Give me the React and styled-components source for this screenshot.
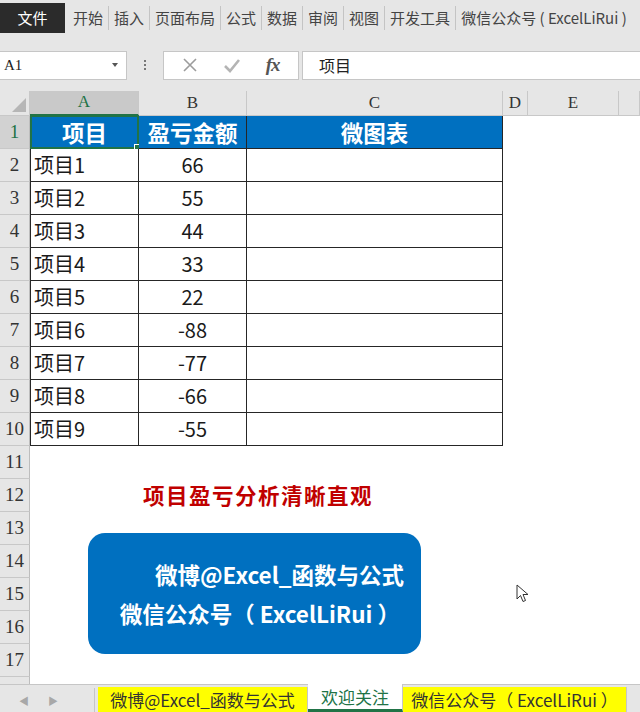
import React from 'react'
import styled, { createGlobalStyle } from 'styled-components'

const GlobalStyle = createGlobalStyle`
  body {
    margin: 0;
    font-family: "Noto Sans CJK SC", "Noto Sans", sans-serif;
    background: #fff;
  }
`

const Window = styled.div`
  width: 640px;
  height: 712px;
  overflow: hidden;
  display: flex;
  flex-direction: column;
  background: #e6e6e6;
`

const RibbonTabs = styled.nav`
  height: 33px;
  display: flex;
  align-items: flex-end;
  font-size: 15px;
  color: #444;
  overflow: hidden;
`

const FileTab = styled.div`
  flex-shrink: 0;
  width: 65px;
  height: 30px;
  background: #2b2b2b;
  color: #fff;
  display: flex;
  align-items: center;
  justify-content: center;
  margin-right: 3px;
`

const RibbonTab = styled.div`
  flex-shrink: 0;
  display: flex;
  align-items: center;
  padding: 0 5px;
  white-space: nowrap;
  border-left: ${p => (p.first ? 'none' : '1px solid #c4c4c4')};
  height: 24px;
  margin-bottom: 3px;
`

const Band = styled.div`
  height: ${p => p.h}px;
  flex-shrink: 0;
`

const FormulaRow = styled.div`
  height: 29px;
  display: flex;
  align-items: stretch;
`

const Field = styled.div`
  background: #fff;
  border: 1px solid #c6c6c6;
  box-sizing: border-box;
  display: flex;
  align-items: center;
`

const NameBox = styled(Field)`
  width: 127px;
  border-left: none;
  padding: 0 8px 0 4px;
  justify-content: space-between;
  font-family: "Liberation Serif", serif;
  font-size: 15px;
  color: #222;
`

const Caret = styled.span`
  width: 0;
  height: 0;
  border-left: 3px solid transparent;
  border-right: 3px solid transparent;
  border-top: 4px solid #555;
`

const Dots = styled.div`
  width: 36px;
  display: flex;
  flex-direction: column;
  align-items: center;
  justify-content: center;
  gap: 2px;
  span {
    width: 2px;
    height: 2px;
    background: #777;
  }
`

const FuncBox = styled(Field)`
  width: 136px;
  justify-content: space-around;
  padding: 0 6px;
  margin-right: 3px;
`

const FxLabel = styled.span`
  font-family: "Liberation Serif", serif;
  font-style: italic;
  font-weight: bold;
  font-size: 19px;
  color: #555;
  letter-spacing: -1px;
`

const FormulaInput = styled(Field)`
  flex: 1;
  border-right: none;
  padding-left: 16px;
  font-size: 16px;
  color: #222;
`

const Sheet = styled.div`
  position: relative;
  height: 594px;
  background: #fff;
  display: grid;
  grid-template-columns: 30px 109px 108px 256px 25px 91px 1fr;
  grid-template-rows: 25px repeat(17, 33px) 1fr;
`

const Corner = styled.div`
  background: #e6e6e6;
  border-right: 1px solid #c8c8c8;
  border-bottom: 1px solid #c8c8c8;
  box-sizing: border-box;
  position: relative;
  &::after {
    content: '';
    position: absolute;
    right: 3px;
    bottom: 3px;
    border-left: 14px solid transparent;
    border-bottom: 14px solid #b6b6b6;
  }
`

const ColHead = styled.div`
  background: ${p => (p.active ? '#c9c9c9' : '#e6e6e6')};
  border-right: 1px solid #c8c8c8;
  border-bottom: ${p => (p.active ? '2px solid #217346' : '1px solid #c8c8c8')};
  box-sizing: border-box;
  display: flex;
  align-items: center;
  justify-content: center;
  font-family: "Liberation Serif", serif;
  font-size: 17px;
  color: ${p => (p.active ? '#217346' : '#333')};
`

const RowHead = styled.div`
  background: ${p => (p.active ? '#d2d2d2' : '#e6e6e6')};
  border-right: 1px solid #bdbdbd;
  border-bottom: 1px solid #c8c8c8;
  box-sizing: border-box;
  display: flex;
  align-items: center;
  justify-content: center;
  font-family: "Liberation Serif", serif;
  font-size: 19px;
  color: ${p => (p.active ? '#217346' : '#333')};
`

const Cell = styled.div`
  box-sizing: border-box;
  display: flex;
  align-items: center;
  position: relative;
  justify-content: ${p => (p.center ? 'center' : 'flex-start')};
  padding-left: ${p => (p.center ? 0 : 3)}px;
  font-size: 20px;
  color: #1a1a1a;
  background: #fff;
  border-right: ${p => (p.table ? '1px solid #262626' : 'none')};
  border-bottom: ${p => (p.table ? '1px solid #262626' : 'none')};
`

const HeadCell = styled(Cell)`
  background: #0070c0;
  color: #fff;
  font-weight: bold;
  font-size: 22.5px;
  justify-content: center;
  padding-left: 0;
`

const Selection = styled.div`
  position: absolute;
  inset: -1px -1px -1px -1px;
  border: 2px solid #217346;
  pointer-events: none;
  &::after {
    content: '';
    position: absolute;
    right: -4px;
    bottom: -4px;
    width: 5px;
    height: 5px;
    background: #217346;
    border: 1px solid #fff;
  }
`

const Title = styled.div`
  position: absolute;
  left: 113px;
  top: 388px;
  width: 290px;
  text-align: center;
  color: #c00000;
  font-weight: bold;
  font-size: 21.5px;
  letter-spacing: 1.5px;
`

const Banner = styled.div`
  position: absolute;
  left: 88px;
  top: 442px;
  width: 333px;
  height: 121px;
  border-radius: 17px;
  background: #0070c0;
  color: #fff;
  font-weight: bold;
  font-size: 22.5px;
  display: flex;
  flex-direction: column;
  align-items: flex-end;
  justify-content: center;
  gap: 7px;
  padding-right: 17px;
  box-sizing: border-box;
`

const BannerLine = styled.div`
  margin-right: ${p => p.shift || 0}px;
  white-space: nowrap;
`

const Cursor = styled.svg`
  position: absolute;
  left: 516px;
  top: 493px;
`

const SheetTabs = styled.div`
  flex: 1;
  display: flex;
  align-items: stretch;
  border-top: 1px solid #c6c6c6;
  background: #e6e6e6;
`

const NavArrows = styled.div`
  width: 95px;
  display: flex;
  align-items: center;
  gap: 19px;
  padding-left: 19px;
  box-sizing: border-box;
  color: #a8a8a8;
  font-size: 10px;
  border-right: 1px solid #c6c6c6;
  margin: 3px 0 0;
`

const SheetTab = styled.div`
  display: flex;
  align-items: center;
  justify-content: center;
  width: ${p => p.w}px;
  box-sizing: border-box;
  font-size: 17px;
  margin-top: ${p => (p.active ? -1 : 2)}px;
  background: ${p => (p.active ? '#fff' : '#ffff00')};
  color: ${p => (p.active ? '#217346' : '#333')};
  border-bottom: ${p => (p.active ? '3px solid #217346' : 'none')};
  border-right: 1px solid #c6c6c6;
  white-space: nowrap;
`

const columns = ['A', 'B', 'C', 'D', 'E', '']
const data = [66, 55, 44, 33, 22, -88, -77, -66, -55]

export default function App() {
  const rows = []
  for (let r = 1; r <= 17; r++) {
    rows.push(<RowHead key={'h' + r} active={r === 1}>{r}</RowHead>)
    if (r === 1) {
      rows.push(
        <HeadCell key="a1" table style={{ borderLeft: '1px solid #262626' }}>
          项目
          <Selection />
        </HeadCell>
      )
      rows.push(<HeadCell key="b1" table>盈亏金额</HeadCell>)
      rows.push(<HeadCell key="c1" table>微图表</HeadCell>)
    } else if (r <= 10) {
      const v = data[r - 2]
      rows.push(<Cell key={'a' + r} table style={{ borderLeft: '1px solid #262626' }}>项目{r - 1}</Cell>)
      rows.push(<Cell key={'b' + r} table center>{v < 0 ? '-' + Math.abs(v) : v}</Cell>)
      rows.push(<Cell key={'c' + r} table />)
    } else {
      rows.push(<Cell key={'a' + r} />, <Cell key={'b' + r} />, <Cell key={'c' + r} />)
    }
    rows.push(<Cell key={'d' + r} />, <Cell key={'e' + r} />, <Cell key={'f' + r} />)
  }

  return (
    <Window>
      <GlobalStyle />
      <RibbonTabs>
        <FileTab>文件</FileTab>
        <RibbonTab first>开始</RibbonTab>
        <RibbonTab>插入</RibbonTab>
        <RibbonTab>页面布局</RibbonTab>
        <RibbonTab>公式</RibbonTab>
        <RibbonTab>数据</RibbonTab>
        <RibbonTab>审阅</RibbonTab>
        <RibbonTab>视图</RibbonTab>
        <RibbonTab>开发工具</RibbonTab>
        <RibbonTab>微信公众号 ( ExcelLiRui )</RibbonTab>
      </RibbonTabs>
      <Band h={18} />
      <FormulaRow>
        <NameBox>
          A1
          <Caret />
        </NameBox>
        <Dots><span /><span /><span /></Dots>
        <FuncBox>
          <svg width="16" height="16" viewBox="0 0 16 16">
            <path d="M2 2 L14 14 M14 2 L2 14" stroke="#9c9c9c" strokeWidth="1.6" fill="none" />
          </svg>
          <svg width="18" height="16" viewBox="0 0 18 16">
            <path d="M2 9 L7 14 L16 3" stroke="#b4b4b4" strokeWidth="2.6" fill="none" />
          </svg>
          <FxLabel>fx</FxLabel>
        </FuncBox>
        <FormulaInput>项目</FormulaInput>
      </FormulaRow>
      <Band h={11} />
      <Sheet>
        <Corner />
        {columns.map((c, i) => (
          <ColHead key={i} active={c === 'A'}>{c}</ColHead>
        ))}
        {rows}
        <RowHead style={{ borderBottom: 'none' }} />
        <Cell /><Cell /><Cell /><Cell /><Cell /><Cell />
        <Title>项目盈亏分析清晰直观</Title>
        <Banner>
          <BannerLine>微博@Excel_函数与公式</BannerLine>
          <BannerLine shift={4}>微信公众号（ ExcelLiRui ）</BannerLine>
        </Banner>
        <Cursor width="14" height="20" viewBox="0 0 14 20">
          <path d="M1 1 L1 15 L4.5 11.5 L7 17.5 L9.5 16.5 L7 10.5 L12 10.5 Z" fill="#fff" stroke="#333" strokeWidth="1" strokeLinejoin="round" />
        </Cursor>
      </Sheet>
      <SheetTabs>
        <NavArrows>
          <span>◀</span>
          <span>▶</span>
        </NavArrows>
        <SheetTab w={210} style={{ marginLeft: 3 }}>微博@Excel_函数与公式</SheetTab>
        <SheetTab w={95} active>欢迎关注</SheetTab>
        <SheetTab w={224}>微信公众号（ ExcelLiRui ）</SheetTab>
      </SheetTabs>
    </Window>
  )
}
